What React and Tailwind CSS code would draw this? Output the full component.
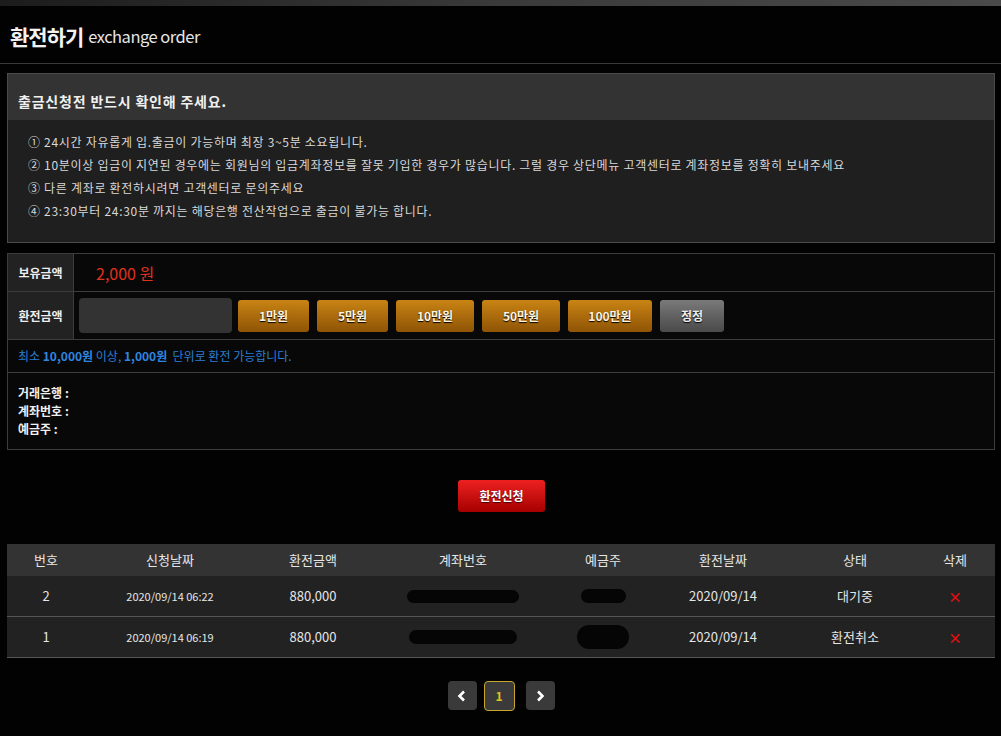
import React from 'react';

const notices = [
  '① 24시간 자유롭게 입.출금이 가능하며 최장 3~5분 소요됩니다.',
  '② 10분이상 입금이 지연된 경우에는 회원님의 입금계좌정보를 잘못 기입한 경우가 많습니다. 그럴 경우 상단메뉴 고객센터로 계좌정보를 정확히 보내주세요',
  '③ 다른 계좌로 환전하시려면 고객센터로 문의주세요',
  '④ 23:30부터 24:30분 까지는 해당은행 전산작업으로 출금이 불가능 합니다.',
];

const amounts = [
  { label: '1만원', w: 'w-[71px]' },
  { label: '5만원', w: 'w-[71px]' },
  { label: '10만원', w: 'w-[78px]' },
  { label: '50만원', w: 'w-[78px]' },
  { label: '100만원', w: 'w-[84px]' },
];

const cols = ['w-[78px]', 'w-[170px]', 'w-[116px]', 'w-[184px]', 'w-[96px]', 'w-[144px]', 'w-[120px]', 'flex-1'];
const heads = ['번호', '신청날짜', '환전금액', '계좌번호', '예금주', '환전날짜', '상태', '삭제'];

const rows = [
  { no: '2', req: '2020/09/14 06:22', amt: '880,000', acc: 'w-[112px] h-[13px]', name: 'w-[45px] h-[14px]', date: '2020/09/14', state: '대기중' },
  { no: '1', req: '2020/09/14 06:19', amt: '880,000', acc: 'w-[108px] h-[14px]', name: 'w-[52px] h-[24px]', date: '2020/09/14', state: '환전취소' },
];

const Blob = ({ cls }) => <div className={`${cls} rounded-full bg-[#050505]`} />;

const App = () => {
  return (
    <div className="min-h-screen w-full bg-[#020202] font-['Noto_Sans_CJK_KR','Noto_Sans',sans-serif] text-white">
      {/* top strip */}
      <div className="h-[6px] bg-gradient-to-r from-[#1c1c1c] via-[#3a3a3a] to-[#4a4a4a]" />

      {/* title */}
      <div className="flex h-[58px] items-center gap-[5px] border-b border-[#3a3a3a] pl-[10px] pt-[4px]">
        <span className="text-[21px] font-bold tracking-[-1px] text-[#f2f2f2]">환전하기</span>
        <span className="text-[16.5px] tracking-[-0.5px] text-[#e6e6e6]">exchange order</span>
      </div>

      <div className="px-[7px] pr-[6px]">
        {/* notice */}
        <div className="mt-[9px] border border-[#4a4a4a] bg-[#1f1f1f]">
          <div className="flex h-[46px] items-center bg-[#333333] pl-[10px] pt-[8px] text-[14px] font-bold tracking-[0.8px] text-[#f0f0f0]">
            출금신청전 반드시 확인해 주세요.
          </div>
          <ul className="pb-[20px] pl-[20px] pt-[10px] text-[12px] leading-[23px] tracking-[0.7px] text-[#d8d8d8]">
            {notices.map((n) => (
              <li key={n}>{n}</li>
            ))}
          </ul>
        </div>

        {/* form */}
        <div className="mt-[10px] border border-[#3c3c3c] bg-[#080808] text-[12px]">
          <div className="flex h-[38px] border-b border-[#3c3c3c]">
            <div className="flex w-[66px] items-center justify-center border-r border-[#3c3c3c] bg-[#222] font-bold text-[#eee]">보유금액</div>
            <div className="flex items-center pl-[22px] text-[16px] text-[#e0301e]">2,000 원</div>
          </div>
          <div className="flex h-[48px] border-b border-[#3c3c3c]">
            <div className="flex w-[66px] items-center justify-center border-r border-[#3c3c3c] bg-[#222] font-bold text-[#eee]">환전금액</div>
            <div className="flex items-center gap-[8px] pl-[5px]">
              <div className="mr-[-2px] h-[35px] w-[153px] rounded-[4px] bg-[#333]" />
              {amounts.map((a) => (
                <button
                  key={a.label}
                  className={`${a.w} h-[32px] rounded-[3px] bg-gradient-to-b from-[#c98414] to-[#8f5406] text-[12px] font-bold text-[#fff4e0] [text-shadow:0_1px_1px_#000]`}
                >
                  {a.label}
                </button>
              ))}
              <button className="h-[32px] w-[64px] rounded-[3px] bg-gradient-to-b from-[#7a7a7a] to-[#4a4a4a] text-[12px] font-bold text-[#eee] [text-shadow:0_1px_1px_#000]">
                정정
              </button>
            </div>
          </div>
          <div className="flex h-[33px] items-center border-b border-[#3c3c3c] pl-[10px] text-[12px] text-[#2a7fd4]">
            최소&nbsp;<b className="text-[#2f86e0]">10,000원</b>&nbsp;이상,&nbsp;<b className="text-[#2f86e0]">1,000원</b>&nbsp;&nbsp;단위로 환전 가능합니다.
          </div>
          <div className="h-[76px] pl-[10px] pt-[11px] text-[12px] font-bold leading-[18px] text-[#f0f0f0]">
            <div>거래은행 :</div>
            <div>계좌번호 :</div>
            <div>예금주 :</div>
          </div>
        </div>

        {/* submit */}
        <div className="flex justify-center pb-[32px] pt-[30px]">
          <button className="ml-[1px] h-[32px] w-[87px] rounded-[3px] bg-gradient-to-b from-[#ee2020] to-[#a60000] text-[12px] font-bold text-white [text-shadow:0_1px_1px_#400]">
            환전신청
          </button>
        </div>

        {/* history */}
        <div className="text-[#e6e6e6]">
          <div className="flex h-[32px] items-center bg-[#333] text-[13px]">
            {heads.map((h, i) => (
              <div key={h} className={`${cols[i]} text-center`}>{h}</div>
            ))}
          </div>
          {rows.map((r) => (
            <div key={r.no} className="flex h-[41px] items-center border-b border-[#555] bg-[#222] text-[13px]">
              <div className={`${cols[0]} text-center`}>{r.no}</div>
              <div className={`${cols[1]} text-center text-[11px]`}>{r.req}</div>
              <div className={`${cols[2]} text-center`}>{r.amt}</div>
              <div className={`${cols[3]} flex justify-center`}><Blob cls={r.acc} /></div>
              <div className={`${cols[4]} flex justify-center`}><Blob cls={r.name} /></div>
              <div className={`${cols[5]} text-center`}>{r.date}</div>
              <div className={`${cols[6]} text-center`}>{r.state}</div>
              <div className={`${cols[7]} text-center text-[14px] font-bold text-[#e01010]`}>×</div>
            </div>
          ))}
        </div>

        {/* pagination */}
        <div className="flex justify-center gap-[7px] pt-[23px]">
          <button className="flex h-[29px] w-[29px] items-center justify-center rounded-[4px] bg-[#3a3a3a]">
            <svg width="10" height="12" viewBox="0 0 10 12"><path d="M7 1.5 2.5 6 7 10.5" fill="none" stroke="#fff" strokeWidth="2.6" /></svg>
          </button>
          <button className="flex h-[30px] w-[31px] items-center justify-center rounded-[4px] border border-[#c9a72a] bg-[#3a3a3a] text-[12px] font-bold text-[#e0c020]">
            1
          </button>
          <button className="ml-[4px] flex h-[29px] w-[29px] items-center justify-center rounded-[4px] bg-[#3a3a3a]">
            <svg width="10" height="12" viewBox="0 0 10 12"><path d="M3 1.5 7.5 6 3 10.5" fill="none" stroke="#fff" strokeWidth="2.6" /></svg>
          </button>
        </div>
      </div>
    </div>
  );
};

export default App;
